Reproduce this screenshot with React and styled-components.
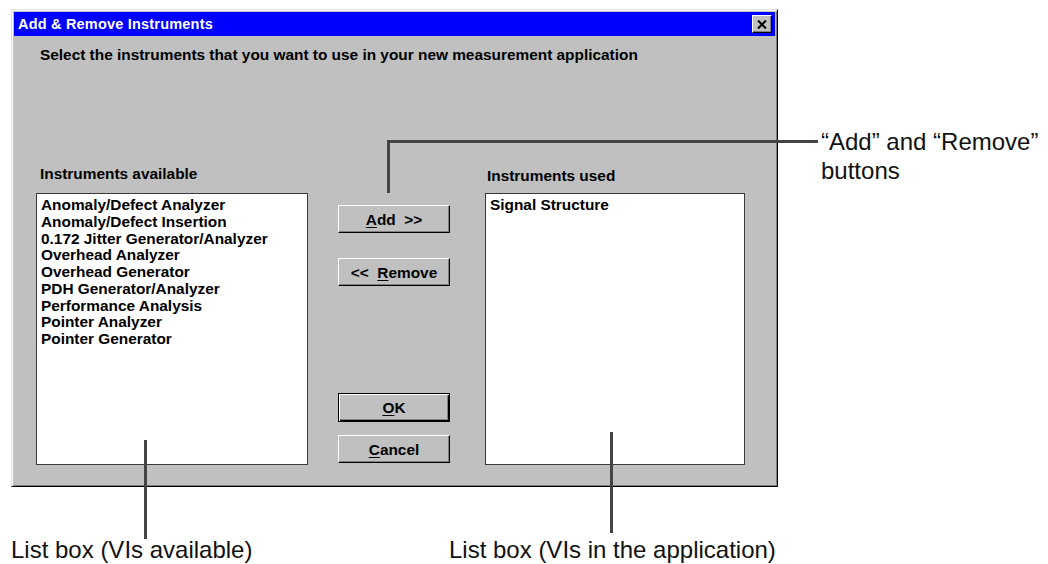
import styled, { createGlobalStyle } from "styled-components";

const GlobalStyle = createGlobalStyle`
    html, body {
        margin: 0;
        padding: 0;
        background: #ffffff;
    }
    body {
        font-family: 'Liberation Sans', Arial, sans-serif;
    }
`;

const available = [
    "Anomaly/Defect Analyzer",
    "Anomaly/Defect Insertion",
    "0.172 Jitter Generator/Analyzer",
    "Overhead Analyzer",
    "Overhead Generator",
    "PDH Generator/Analyzer",
    "Performance Analysis",
    "Pointer Analyzer",
    "Pointer Generator",
];

const used = ["Signal Structure"];

export default function App() {
    return (
        <Page>
            <GlobalStyle />
            <Dialog>
                <TitleBar>
                    <span>Add &amp; Remove Instruments</span>
                    <CloseButton>
                        <svg width="10" height="9" viewBox="0 0 10 9">
                            <path d="M1 0.5 L9 8.5 M9 0.5 L1 8.5" stroke="#000" strokeWidth="2" />
                        </svg>
                    </CloseButton>
                </TitleBar>
                <Body>
                    <Instruction>
                        Select the instruments that you want to use in your new measurement application
                    </Instruction>
                    <Row>
                        <Column>
                            <Label $indent={4}>Instruments available</Label>
                            <ListBox $width={272}>
                                {available.map((item) => (
                                    <Item key={item}>{item}</Item>
                                ))}
                            </ListBox>
                        </Column>
                        <ButtonColumn>
                            <ButtonGroup $gap={25}>
                                <Button>
                                    <u>A</u>dd&nbsp;&nbsp;&gt;&gt;
                                </Button>
                                <Button>
                                    &lt;&lt;&nbsp;&nbsp;<u>R</u>emove
                                </Button>
                            </ButtonGroup>
                            <ButtonGroup $gap={13}>
                                <Button $default>
                                    <u>O</u>K
                                </Button>
                                <Button>
                                    <u>C</u>ancel
                                </Button>
                            </ButtonGroup>
                        </ButtonColumn>
                        <Column>
                            <Label $indent={2} $shift={2}>Instruments used</Label>
                            <ListBox $width={260}>
                                {used.map((item) => (
                                    <Item key={item}>{item}</Item>
                                ))}
                            </ListBox>
                        </Column>
                    </Row>
                </Body>
            </Dialog>

            {/* callout: Add / Remove buttons */}
            <VLine style={{ left: 387, top: 140, height: 53 }} />
            <HLine style={{ left: 387, top: 140, width: 431 }} />
            <Callout style={{ left: 821, top: 127 }}>
                “Add” and “Remove”
                <br />
                buttons
            </Callout>

            {/* callout: left list box */}
            <VLine style={{ left: 144, top: 440, height: 99 }} />
            <Callout style={{ left: 11, top: 535 }}>List box (VIs available)</Callout>

            {/* callout: right list box */}
            <VLine style={{ left: 610, top: 432, height: 101 }} />
            <Callout style={{ left: 449, top: 535 }}>List box (VIs in the application)</Callout>
        </Page>
    );
}

const Page = styled.div`
    position: relative;
    width: 1048px;
    height: 564px;
    overflow: hidden;
    padding: 9px 0 0 11px;
    box-sizing: border-box;
`;

const Dialog = styled.div`
    width: 767px;
    height: 478px;
    box-sizing: border-box;
    background: #c0c0c0;
    border-top: 1px solid #dfdfdf;
    border-left: 1px solid #dfdfdf;
    border-right: 1px solid #000000;
    border-bottom: 1px solid #000000;
    box-shadow: inset 1px 1px #ffffff, inset -1px -1px #808080;
    padding: 2px;
    display: flex;
    flex-direction: column;
`;

const TitleBar = styled.div`
    height: 24px;
    background: #0000ff;
    color: #ffffff;
    display: flex;
    align-items: center;
    justify-content: space-between;
    padding: 0 3px 0 4px;
    font-weight: bold;
    font-size: 14.5px;
    letter-spacing: 0.2px;
`;

const CloseButton = styled.div`
    width: 20px;
    height: 18px;
    box-sizing: border-box;
    background: #c0c0c0;
    border-top: 1px solid #ffffff;
    border-left: 1px solid #ffffff;
    border-right: 1px solid #000000;
    border-bottom: 1px solid #000000;
    box-shadow: inset -1px -1px #808080;
    display: flex;
    align-items: center;
    justify-content: center;
`;

const Body = styled.div`
    flex: 1;
    padding: 10px 0 0 22px;
    font-weight: bold;
    font-size: 15.4px;
    line-height: 17px;
    color: #000000;
`;

const Instruction = styled.div`
    padding-left: 4px;
`;

const Row = styled.div`
    display: flex;
    align-items: flex-start;
    margin-top: 102px;
`;

const Column = styled.div`
    display: flex;
    flex-direction: column;
`;

const Label = styled.div`
    padding-left: ${(p) => p.$indent}px;
    margin-top: ${(p) => p.$shift || 0}px;
    margin-bottom: ${(p) => 11 - (p.$shift || 0)}px;
`;

const ListBox = styled.div`
    width: ${(p) => p.$width}px;
    height: 272px;
    box-sizing: border-box;
    background: #ffffff;
    border: 1px solid #3a3a3a;
    padding: 3px 4px;
    line-height: 16.75px;
`;

const Item = styled.div`
    white-space: nowrap;
`;

const ButtonColumn = styled.div`
    width: 112px;
    height: 258px;
    margin: 40px 35px 0 30px;
    display: flex;
    flex-direction: column;
    justify-content: space-between;
`;

const ButtonGroup = styled.div`
    display: flex;
    flex-direction: column;
    gap: ${(p) => p.$gap}px;
`;

const Button = styled.div`
    height: ${(p) => (p.$default ? 29 : 28)}px;
    box-sizing: border-box;
    background: #c0c0c0;
    display: flex;
    align-items: center;
    justify-content: center;
    white-space: nowrap;
    border: 1px solid #000000;
    border-top-color: ${(p) => (p.$default ? "#000000" : "#ffffff")};
    border-left-color: ${(p) => (p.$default ? "#000000" : "#ffffff")};
    box-shadow: ${(p) =>
        p.$default
            ? "inset 1px 1px #ffffff, inset -1px -1px #000000, inset -2px -2px #808080"
            : "inset -1px -1px #808080"};
    u {
        text-decoration-thickness: 1px;
        text-underline-offset: 2px;
    }
`;

const VLine = styled.div`
    position: absolute;
    width: 3px;
    background: #444444;
`;

const HLine = styled.div`
    position: absolute;
    height: 3px;
    background: #444444;
`;

const Callout = styled.div`
    position: absolute;
    font-family: 'Liberation Sans', Arial, sans-serif;
    font-size: 24px;
    line-height: 29px;
    color: #111111;
    white-space: nowrap;
`;
